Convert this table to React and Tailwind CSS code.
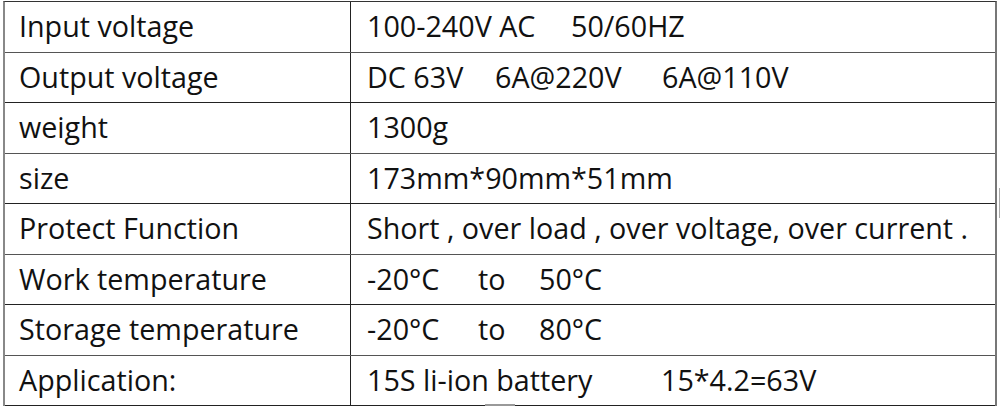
const rows = [
  { label: "Input voltage", parts: [["100-240V AC", "w-[204px]"], ["50/60HZ"]] },
  { label: "Output voltage", parts: [["DC 63V", "w-[128px]"], ["6A@220V", "w-[167px]"], ["6A@110V"]] },
  { label: "weight", parts: [["1300g"]] },
  { label: "size", parts: [["173mm*90mm*51mm"]] },
  { label: "Protect Function", parts: [["Short , over load , over voltage, over current ."]] },
  { label: "Work temperature", parts: [["-20°C", "w-[111px]"], ["to", "w-[61px]"], ["50°C"]] },
  { label: "Storage temperature", parts: [["-20°C", "w-[111px]"], ["to", "w-[61px]"], ["80°C"]] },
  { label: "Application:", parts: [["15S li-ion battery", "w-[294px]"], ["15*4.2=63V"]] },
];

export default function App() {
  return (
    <div className="relative w-[1000px] h-[408px] bg-white overflow-hidden text-[#111]"
      style={{ fontFamily: '"Open Sans", "Noto Sans", sans-serif' }}>
      <div className="ml-[3px] mt-[1px] w-[994px] border-t border-l-2 border-r-2 border-t-[#333] border-l-[#888] border-r-[#777]">
        {rows.map((r, i) => (
          <div key={i} className={`flex h-[50.5px] border-b ${i % 2 === 0 ? "border-[#555]" : "border-[#222]"}`}>
            <div className="w-[346px] shrink-0 flex items-center pl-[14px] border-r border-[#222] text-[28.7px] leading-none whitespace-pre">
              {r.label}
            </div>
            <div className="flex-1 flex items-center pl-[16px] text-[28.7px] leading-none whitespace-pre">
              {r.parts.map(([t, w], j) => (
                <span key={j} className={`inline-block ${w || ""}`}>{t}</span>
              ))}
            </div>
          </div>
        ))}
      </div>
      <div className="absolute left-[485px] top-[404px] w-[30px] h-[2px] bg-[#999]" />
      <div className="absolute left-[999px] top-[188px] w-[1px] h-[30px] bg-[#aaa]" />
    </div>
  );
}
